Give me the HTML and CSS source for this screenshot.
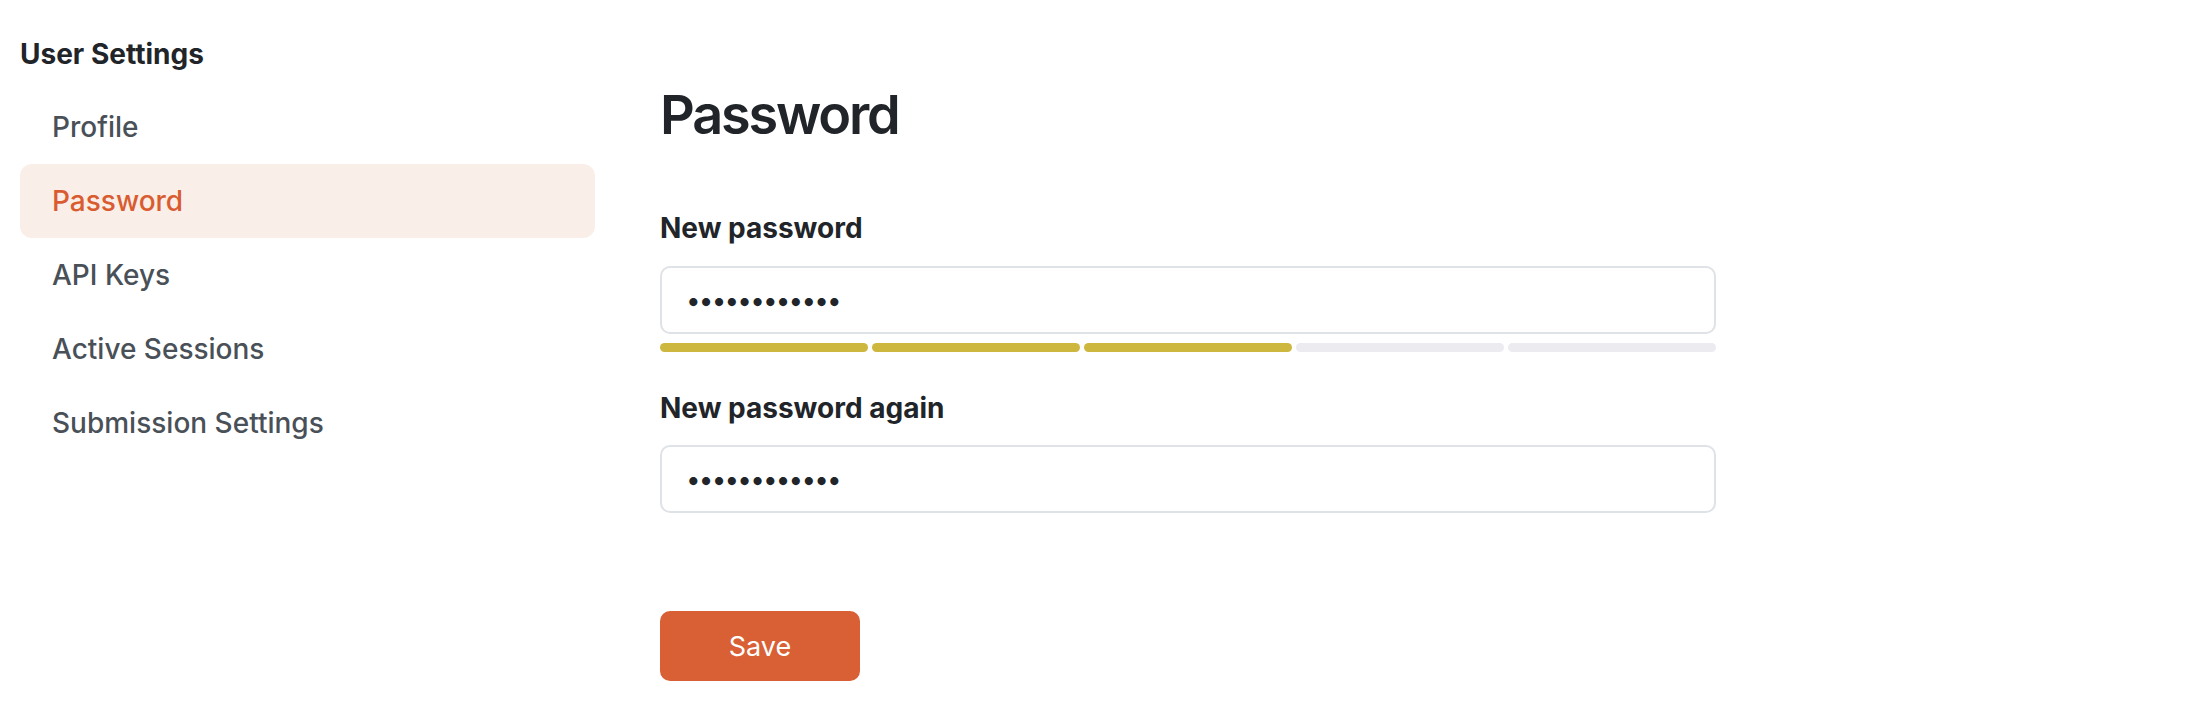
FILE: index.html
```html
<!DOCTYPE html>
<html lang="en">
<head>
<meta charset="utf-8">
<title>User Settings – Password</title>
<link rel="stylesheet" href="styles.css">
</head>
<body>
<div class="layout">
  <aside class="sidebar">
    <h2 class="sidebar-title">User Settings</h2>
    <nav class="nav">
      <a class="nav-item" href="#">Profile</a>
      <a class="nav-item active" href="#">Password</a>
      <a class="nav-item" href="#">API Keys</a>
      <a class="nav-item" href="#">Active Sessions</a>
      <a class="nav-item" href="#">Submission Settings</a>
    </nav>
  </aside>
  <main class="main">
    <h1 class="page-title">Password</h1>
    <form class="form">
      <label class="field-label" for="pw1">New password</label>
      <input class="field-input" id="pw1" type="password" value="abcdefghijkl">
      <div class="strength">
        <span class="seg on"></span>
        <span class="seg on"></span>
        <span class="seg on"></span>
        <span class="seg"></span>
        <span class="seg"></span>
      </div>
      <label class="field-label second" for="pw2">New password again</label>
      <input class="field-input" id="pw2" type="password" value="abcdefghijkl">
      <button class="save-btn" type="button">Save</button>
    </form>
  </main>
</div>
</body>
</html>
```
FILE: styles.css
```css
* { box-sizing: border-box; }
html, body { margin: 0; padding: 0; background: #ffffff; }
body {
  font-family: Inter, "Noto Sans", "Liberation Sans", sans-serif;
  color: #212529;
}
.layout {
  display: flex;
  gap: 65px;
  padding: 0 20px;
}
.sidebar {
  width: 575px;
  flex: none;
  padding-top: 36px;
}
.sidebar-title {
  margin: 0 0 18px 0;
  font-size: 28px;
  line-height: 36px;
  font-weight: 700;
  color: #212529;
}
.nav { display: flex; flex-direction: column; }
.nav-item {
  display: flex;
  align-items: center;
  height: 74px;
  padding-left: 32px;
  border-radius: 12px;
  font-size: 28px;
  font-weight: 500;
  color: #495057;
  text-decoration: none;
}
.nav-item.active {
  background: #faeee8;
  color: #d95c31;
}
.main {
  width: 1056px;
  flex: none;
  padding-top: 81px;
}
.page-title {
  margin: 0;
  font-size: 54px;
  line-height: 67px;
  font-weight: 600;
  letter-spacing: -2.2px;
  color: #212529;
}
.form { display: flex; flex-direction: column; margin-top: 60px; }
.field-label {
  display: block;
  font-size: 28px;
  line-height: 40px;
  font-weight: 700;
  color: #212529;
  margin-bottom: 18px;
}
.field-label.second { margin-top: 36px; margin-bottom: 17px; }
.field-input {
  width: 100%;
  height: 68px;
  border: 2px solid #dfe2e6;
  border-radius: 10px;
  padding: 0 24px;
  font-family: Inter, "Noto Sans", "Liberation Sans", sans-serif;
  font-size: 26px;
  letter-spacing: -1.8px;
  color: #212529;
  background: #ffffff;
  outline: none;
}
.strength {
  display: flex;
  gap: 4px;
  margin-top: 9px;
}
.seg {
  flex: 1;
  height: 9px;
  border-radius: 5px;
  background: #ebebf0;
}
.seg.on { background: #cdb73f; }
.save-btn {
  align-self: flex-start;
  margin-top: 98px;
  width: 200px;
  height: 70px;
  border: none;
  border-radius: 10px;
  background: #d95f35;
  color: #ffffff;
  font-family: Inter, "Noto Sans", "Liberation Sans", sans-serif;
  font-size: 27px;
  font-weight: 400;
  cursor: pointer;
}
```
